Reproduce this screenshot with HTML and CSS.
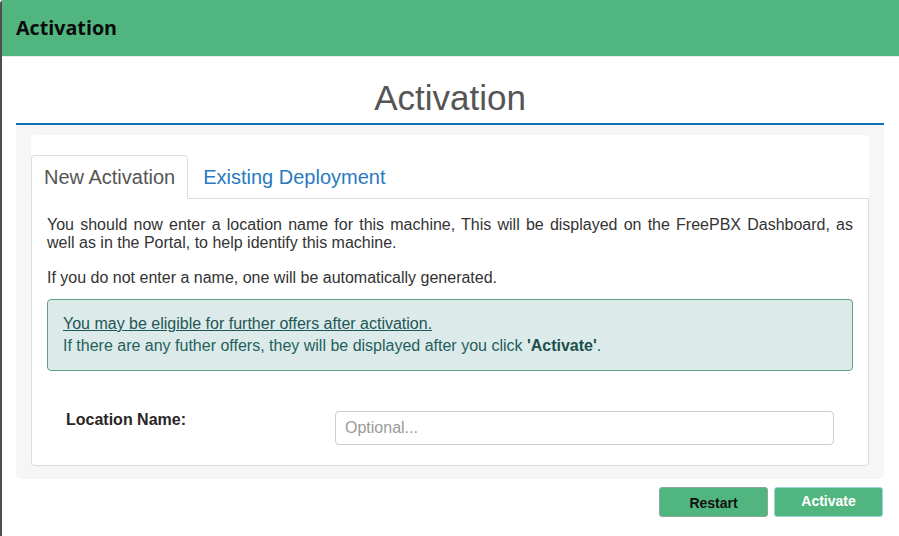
FILE: index.html
```html
<!DOCTYPE html>
<html>
<head>
<meta charset="utf-8">
<title>Activation</title>
<link rel="stylesheet" href="styles.css">
</head>
<body>
<div class="dialog">
  <div class="dialog-header">Activation</div>
  <div class="dialog-body">
    <h1 class="page-title">Activation</h1>
    <div class="panel">
      <div class="card">
        <ul class="tabs">
          <li class="tab active">New Activation</li>
          <li class="tab">Existing Deployment</li>
        </ul>
        <div class="tab-content">
          <p class="para">You should now enter a location name for this machine, This will be displayed on the FreePBX Dashboard, as well as in the Portal, to help identify this machine.</p>
          <p class="para last">If you do not enter a name, one will be automatically generated.</p>
          <div class="alert">
            <div class="alert-line"><a class="alert-link">You may be eligible for further offers after activation.</a></div>
            <div class="alert-line">If there are any futher offers, they will be displayed after you click <strong>'Activate'</strong>.</div>
          </div>
          <div class="form-row">
            <label class="form-label">Location Name:</label>
            <input class="form-input" type="text" placeholder="Optional...">
          </div>
        </div>
      </div>
    </div>
    <div class="actions">
      <button class="btn btn-restart">Restart</button>
      <button class="btn btn-activate">Activate</button>
    </div>
  </div>
</div>
</body>
</html>
```

FILE: styles.css
```css
html, body {
  margin: 0;
  padding: 0;
  background: #ffffff;
}

.dialog {
  width: 899px;
  height: 536px;
  box-sizing: border-box;
  border-left: 2px solid #4f4f4f;
  border-top-left-radius: 4px;
  overflow: hidden;
  font-family: "Liberation Sans", Arial, sans-serif;
  color: #333333;
}

.dialog-header {
  height: 57px;
  line-height: 55px;
  background: #51b580;
  padding-left: 14px;
  font-family: "Open Sans", sans-serif;
  font-weight: 700;
  font-size: 19.7px;
  color: #0b0b0b;
  border-bottom: 1px solid #e6efe9;
  box-sizing: border-box;
}

.dialog-body {
  padding: 0 15px 0 14px;
}

.page-title {
  margin: 21px 0 0;
  padding-bottom: 5px;
  font-family: "Liberation Sans", Arial, sans-serif;
  font-weight: 400;
  font-size: 35px;
  line-height: 40px;
  color: #555555;
  text-align: center;
  border-bottom: 2px solid #0b6fba;
}

.panel {
  background: #f6f6f6;
  padding: 10px 15px 13px;
  border-radius: 0 0 5px 5px;
}

.card {
  background: #ffffff;
  padding-top: 20px;
  border-radius: 4px;
}

.tabs {
  list-style: none;
  margin: 0;
  padding: 0;
  display: flex;
  gap: 2px;
  border-bottom: 1px solid #dddddd;
}

.tab {
  font-size: 20px;
  line-height: 22px;
  padding: 10px 12px;
  margin-bottom: -1px;
  border: 1px solid transparent;
  border-radius: 4px 4px 0 0;
  color: #2a79c1;
}

.tab.active {
  color: #555555;
  background: #ffffff;
  border-color: #dddddd;
  border-bottom-color: #ffffff;
}

.tab-content {
  border: 1px solid #dddddd;
  border-top: none;
  border-radius: 0 0 4px 4px;
  padding: 17px 15px 20px 15px;
}

.para {
  margin: 0 0 17px;
  font-size: 16px;
  line-height: 18px;
  text-align: justify;
  color: #333333;
}

.para.last {
  margin-bottom: 12px;
}

.alert {
  background: #dcebea;
  border: 1px solid #5d9f87;
  border-radius: 4px;
  padding: 13px 15px;
  color: #245e5c;
  font-size: 16px;
  line-height: 22px;
}

.alert-link {
  color: #1f5656;
  text-decoration: underline;
}

.alert strong {
  color: #1d4f4d;
}

.form-row {
  display: flex;
  align-items: flex-start;
  margin-top: 39px;
  padding: 0 19px 0 19px;
}

.form-label {
  width: 269px;
  padding-top: 1px;
  font-weight: 700;
  font-size: 16px;
  line-height: 18px;
  color: #2b2626;
}

.form-input {
  flex: 1;
  margin-top: 1px;
  height: 34px;
  box-sizing: border-box;
  border: 1px solid #cccccc;
  border-radius: 4px;
  padding: 6px 9px;
  font-family: "Liberation Sans", Arial, sans-serif;
  font-size: 16px;
  color: #555555;
  background: #ffffff;
}

.form-input::placeholder {
  color: #9a9a9a;
}

.actions {
  display: flex;
  justify-content: flex-end;
  gap: 6px;
  margin-top: 8px;
  margin-right: 1px;
}

.btn {
  width: 109px;
  height: 30px;
  box-sizing: border-box;
  background: #51b580;
  border-radius: 3px;
  font-family: "Liberation Sans", Arial, sans-serif;
  font-weight: 700;
  font-size: 14px;
  padding: 0;
}

.btn-restart {
  color: #111111;
  border: 1px solid #8aa897;
  padding-top: 2px;
}

.btn-activate {
  color: #ffffff;
  border: 1px solid #9fd3dc;
  padding-bottom: 2px;
}
```
